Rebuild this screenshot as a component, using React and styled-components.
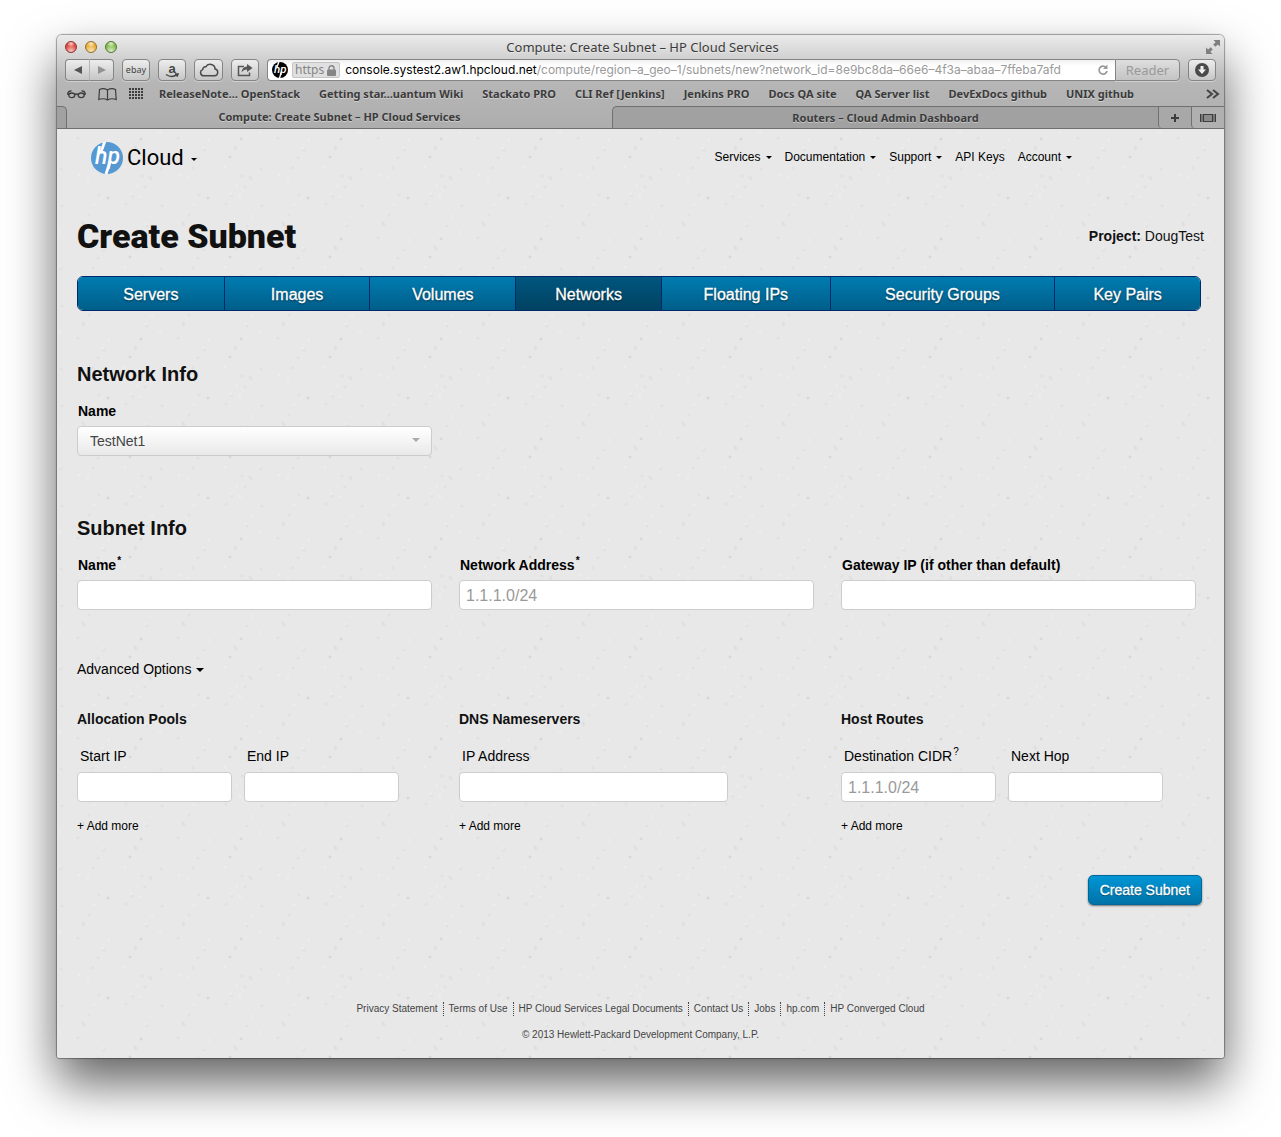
import React from "react";
import styled, { createGlobalStyle, css } from "styled-components";

const sans = '"Liberation Sans", Arial, Helvetica, sans-serif';
const system = '"Noto Sans", "Open Sans", sans-serif';

const GlobalStyle = createGlobalStyle`
  *, *::before, *::after { box-sizing: border-box; }
  body { margin: 0; background: #fff; font-family: ${sans}; font-size: 14px; color: #111; }
  a { color: inherit; text-decoration: none; }
  button, input, select { font: inherit; color: inherit; margin: 0; }
  h1, h2, h3, p, ul { margin: 0; padding: 0; }
`;

/* ---------- window ---------- */

const Desktop = styled.div`
  padding: 35px 57px 79px;
  overflow: hidden;
`;

const Window = styled.div`
  border-radius: 5px 5px 3px 3px;
  box-shadow: 0 0 1px 1px rgba(0, 0, 0, 0.35), 0 25px 50px rgba(0, 0, 0, 0.62);
`;

const Chrome = styled.header`
  border-radius: 5px 5px 0 0;
  background: linear-gradient(#ebebeb 0, #d0d0d0 24px, #b6b6b6 47px, #b2b2b2 71px, #adadad 100%);
  font-family: ${system};
  color: #3b3b3b;
  text-shadow: 0 1px 0 rgba(255, 255, 255, 0.4);
`;

const TitleBar = styled.div`
  display: grid;
  grid-template-columns: 60px 1fr 60px;
  align-items: center;
  height: 24px;
  padding: 0 4px 0 8px;
  font-size: 13px;
  line-height: 22px;
  text-align: center;
`;

const Lights = styled.div`
  display: flex;
  gap: 8px;
`;

const Light = styled.button`
  width: 12px;
  height: 12px;
  padding: 0;
  border: 1px solid ${(p) => p.$edge};
  border-radius: 50%;
  background: radial-gradient(circle at 50% 90%, rgba(255, 255, 255, 0.7), transparent 60%),
    radial-gradient(circle at 50% 15%, rgba(255, 255, 255, 0.75), transparent 40%), ${(p) => p.$fill};
`;

const FullScreen = styled.span`
  display: flex;
  justify-content: flex-end;
`;

const Toolbar = styled.div`
  display: flex;
  gap: 8px;
  height: 23px;
  padding: 0 8px;
`;

const ToolButton = styled.button`
  display: flex;
  align-items: center;
  justify-content: center;
  flex: none;
  width: ${(p) => p.$width || 28}px;
  height: 22px;
  padding: 0;
  border: 1px solid #858585;
  border-radius: 4px;
  background: linear-gradient(#ededed, #c6c6c6);
  box-shadow: 0 1px 0 rgba(255, 255, 255, 0.35);
  font-size: 9px;
  line-height: 16px;
  color: #444;
`;

const Pair = styled.div`
  display: flex;
  flex: none;
`;

const PairButton = styled(ToolButton)`
  width: 25px;
  ${(p) =>
    p.$side === "left"
      ? css`border-right-color: #b4b4b4; border-radius: 4px 0 0 4px;`
      : css`width: 24px; border-left: 0; border-radius: 0 4px 4px 0;`}
`;

const AddressGroup = styled.div`
  display: flex;
  flex: 1;
  min-width: 0;
`;

const Address = styled.div`
  display: flex;
  align-items: center;
  flex: 1;
  min-width: 0;
  height: 22px;
  padding: 0 6px 0 4px;
  border: 1px solid #858585;
  border-right: 0;
  border-radius: 4px 0 0 4px;
  background: linear-gradient(#f0f0f0, #fff 30%);
  font-size: 12px;
  line-height: 18px;
  color: #9a9a9a;
  text-shadow: none;
`;

const Secure = styled.span`
  display: flex;
  align-items: center;
  gap: 3px;
  height: 16px;
  margin: 0 5px 0 4px;
  padding: 0 3px 0 2px;
  border: 1px solid #c4c4c4;
  border-radius: 2px;
  background: #e0e0e0;
  color: #858585;
`;

const Url = styled.span`
  flex: 1;
  min-width: 0;
  overflow: hidden;
  white-space: nowrap;
  font-family: Inter, ${system};
  b { font-weight: 400; color: #000; }
`;

const Reload = styled.button`
  display: flex;
  padding: 0;
  margin-left: 8px;
  border: 0;
  background: none;
`;

const Reader = styled(ToolButton)`
  border-radius: 0 4px 4px 0;
  background: linear-gradient(#dedede, #c4c4c4);
  font-size: 13px;
  color: #999;
`;

const Bookmarks = styled.nav`
  display: flex;
  align-items: center;
  height: 24px;
  padding: 0 4px 0 10px;
  font-size: 11px;
  line-height: 16px;
  font-weight: 700;
  white-space: nowrap;
`;

const BookmarkIcons = styled.span`
  display: flex;
  align-items: center;
  gap: 12px;
  margin-right: 14px;
`;

const BookmarkLinks = styled.span`
  display: flex;
  gap: 19px;
`;

const More = styled.span`
  display: flex;
  margin-left: auto;
`;

const TabBar = styled.div`
  display: flex;
  height: 23px;
  border-bottom: 1px solid #6f6f6f;
`;

const Tab = styled.button`
  flex: 1;
  min-width: 0;
  padding: 0;
  border: 0;
  background: none;
  font-size: 11px;
  line-height: 20px;
  font-weight: 700;
  text-shadow: inherit;
  ${(p) =>
    !p.$active &&
    css`
      border: solid #707070;
      border-width: 1px 0 0 1px;
      border-radius: 5px 0 0 0;
      background: #a1a1a1;
    `}
`;

const TabStub = styled.span`
  width: 10px;
  border: solid #707070;
  border-width: 1px 1px 0 0;
  border-radius: 0 5px 0 0;
  background: #a1a1a1;
`;

const TabTools = styled.div`
  display: flex;
  border-top: 1px solid #707070;
  background: #a1a1a1;
`;

const TabTool = styled.button`
  display: flex;
  align-items: center;
  justify-content: center;
  width: 33px;
  padding: 0;
  border: 0;
  border-left: 1px solid #707070;
  border-radius: 0 0 0 4px;
  background: ${(p) => (p.$raised ? "#b0b0b0" : "#a8a8a8")};
`;

/* ---------- page ---------- */

/* Paper grain: faint specks scattered over a 100px tile. */
const specks = Array.from({ length: 34 }, (_, i) => {
  const x = 3 + ((i * 37 + (i % 5) * 11) % 95);
  const y = 3 + ((i * 61 + (i % 7) * 5) % 95);
  const tone = i % 3 === 0 ? "255, 255, 255, 0.3" : `80, 80, 80, ${i % 8 === 1 ? 0.16 : 0.07}`;
  return `radial-gradient(circle at ${x}px ${y}px, rgba(${tone}) 0, transparent 2px)`;
}).join(", ");

const Page = styled.div`
  border-radius: 0 0 3px 3px;
  background: ${specks};
  background-size: 100px 100px;
  background-color: #e8e8e8;
`;

const SiteHeader = styled.div`
  display: flex;
  align-items: flex-start;
  justify-content: space-between;
  padding: 13px 152px 0 34px;
`;

const Brand = styled.a`
  display: flex;
  align-items: center;
  gap: 4px;
  font-family: Roboto, sans-serif;
  font-size: 22px;
  line-height: 32px;
  color: #000;
`;

const SiteNav = styled.nav`
  display: flex;
  gap: 13px;
  font-size: 12px;
  line-height: 30px;
  color: #000;
`;

const Caret = styled.i`
  display: inline-block;
  margin-left: ${(p) => p.$gap || 5}px;
  vertical-align: middle;
  border: solid transparent;
  border-width: ${(p) => p.$size || 3}px ${(p) => p.$size || 3}px 0;
  border-top-color: currentColor;
`;

const Content = styled.main`
  padding: 42px 20px 0;
`;

const TitleRow = styled.div`
  display: flex;
  align-items: center;
  justify-content: space-between;
  margin-bottom: 20px;
`;

const Title = styled.h1`
  font-family: Roboto, sans-serif;
  font-weight: 900;
  font-size: 34px;
  line-height: 40px;
`;

const Project = styled.p`
  line-height: 20px;
`;

const Sections = styled.nav`
  display: grid;
  grid-template-columns: 146fr 146fr 146fr 146fr 169fr 225fr 146fr;
  height: 35px;
  margin-right: 3px;
  border: 1px solid #00296b;
  border-radius: 6px;
  overflow: hidden;
`;

const Section = styled.a`
  border-left: 1px solid #00296b;
  background: ${(p) => (p.$current ? "linear-gradient(#00567f, #00415f)" : "linear-gradient(#007cb0, #005c87)")};
  font-size: 16px;
  line-height: 35px;
  text-align: center;
  color: #fff;
  -webkit-text-stroke: 0.3px #fff;
  text-shadow: 0 1px 2px rgba(0, 0, 0, 0.6);
  &:first-child { border-left: 0; }
`;

const Group = styled.section`
  margin-top: ${(p) => p.$top}px;
  margin-right: 8px;
`;

const GroupTitle = styled.h2`
  margin-bottom: 15px;
  font-size: 20px;
  line-height: 24px;
`;

const Columns = styled.div`
  display: grid;
  grid-template-columns: repeat(3, 1fr);
  gap: 27px;
`;

const Field = styled.div`
  display: flex;
  flex-direction: column;
  flex: 0 1 ${(p) => p.$width || 355}px;
  min-width: 0;
  gap: ${(p) => (p.$light ? 6 : 5)}px;
`;

const Label = styled.label`
  padding-left: ${(p) => (p.$light ? 3 : 1)}px;
  font-weight: ${(p) => (p.$light ? 400 : 700)};
  line-height: 20px;
  color: #000;
  sup { margin-left: 1px; font-size: 10px; line-height: 0; }
`;

const boxed = css`
  width: 100%;
  height: 30px;
  border: 1px solid #ccc;
  border-radius: 4px;
`;

const Input = styled.input`
  ${boxed}
  padding: 2px 6px 0;
  background: #fff;
  font-size: 16px;
  &::placeholder { color: #999; opacity: 1; }
`;

const SelectBox = styled.div`
  position: relative;
  svg { position: absolute; right: 12px; top: 12px; pointer-events: none; }
`;

const Select = styled.select`
  ${boxed}
  appearance: none;
  padding: 0 30px 0 12px;
  background: linear-gradient(#fff, #e9e9e9);
  color: #444;
`;

const Toggle = styled.button`
  display: block;
  margin: 49px 0 30px;
  padding: 0;
  border: 0;
  background: none;
  line-height: 20px;
  color: #000;
`;

const PoolTitle = styled.h3`
  margin-bottom: 17px;
  font-size: 14px;
  line-height: 20px;
`;

const PoolFields = styled.div`
  display: flex;
  gap: 12px;
  margin-bottom: 14px;
`;

const AddMore = styled.button`
  display: block;
  padding: 0;
  border: 0;
  background: none;
  font-size: 12px;
  line-height: 20px;
  color: #000;
`;

const Actions = styled.div`
  display: flex;
  justify-content: flex-end;
  margin: 39px 2px 0 0;
`;

const Submit = styled.button`
  height: 30px;
  padding: 0 11px;
  border: 1px solid #00679a;
  border-radius: 5px;
  background: linear-gradient(#0096d6, #0073a8);
  box-shadow: 0 1px 2px rgba(0, 0, 0, 0.5);
  color: #fff;
  -webkit-text-stroke: 0.3px #fff;
  text-shadow: 0 1px 1px rgba(0, 0, 0, 0.5);
`;

const Footer = styled.footer`
  padding: 97px 0 16px;
  font-size: 10px;
  line-height: 14px;
  text-align: center;
  color: #444;
`;

const FooterLinks = styled.nav`
  display: flex;
  justify-content: center;
  margin-bottom: 12px;
  a { padding: 0 5px; }
  a + a { border-left: 1px dotted #444; }
`;

/* ---------- drawings ---------- */

const HpMark = ({ size, disc }) => (
  <svg width={size} height={size} viewBox="0 0 32 32" aria-hidden="true">
    <circle cx="16" cy="16" r="16" fill={disc} />
    <g stroke="#fff" strokeWidth="2.8">
      <line x1="14" y1="-1" x2="9.6" y2="11" />
      <line x1="19" y1="20" x2="15" y2="32" />
    </g>
    <text x="4" y="22" fill="#fff" fontFamily="Roboto" fontStyle="italic" fontWeight="500" fontSize="23">hp</text>
  </svg>
);

const Arrow = ({ flip }) => (
  <svg width="10" height="10" viewBox="0 0 10 10">
    <path d={flip ? "M1 1L9 5L1 9Z" : "M9 1L1 5L9 9Z"} fill={flip ? "#929292" : "#555"} />
  </svg>
);

const AmazonIcon = () => (
  <svg width="16" height="18" viewBox="0 0 16 18">
    <text x="8" y="12" textAnchor="middle" fill="#444" fontFamily="Liberation Sans" fontWeight="700" fontSize="13">a</text>
    <path d="M2 13.500q6 4 11 0M11 13.100h3l-1 2.600" fill="none" stroke="#444" strokeWidth="1.500" />
  </svg>
);

const CloudIcon = () => (
  <svg width="20" height="14" viewBox="0 0 20 14">
    <path d="M5 12.800h10.500a3.400 3.400 0 0 0 .6-6.700A5 5 0 0 0 6.800 3.800 2.700 2.700 0 0 0 3.700 6.600 3.200 3.200 0 0 0 5 12.800Z" fill="none" stroke="#4a4a4a" strokeWidth="1.500" />
  </svg>
);

const ShareIcon = () => (
  <svg width="18" height="14" viewBox="0 0 16 14">
    <path d="M7 3.500H1.500V12.500H12.500V9.500" fill="none" stroke="#555" strokeWidth="1.500" />
    <path d="M4.500 9.500Q5 4 10 3.500V1L15.500 5L10 9V6.500Q6.500 6.500 4.500 9.500Z" fill="#555" />
  </svg>
);

const LockIcon = () => (
  <svg width="9" height="11" viewBox="0 0 9 11">
    <rect x="0" y="4.500" width="9" height="6.500" rx="1" fill="#858585" />
    <path d="M2 5V3.300a2.500 2.500 0 0 1 5 0V5" fill="none" stroke="#858585" strokeWidth="1.400" />
  </svg>
);

const ReloadIcon = () => (
  <svg width="12" height="12" viewBox="0 0 12 12">
    <path d="M9 3.300A4 4 0 1 0 10 7" fill="none" stroke="#999" strokeWidth="1.700" />
    <path d="M10.500 0.500V5H6Z" fill="#999" />
  </svg>
);

const DownloadIcon = () => (
  <svg width="14" height="14" viewBox="0 0 14 14">
    <circle cx="7" cy="7" r="7" fill="#4a4a4a" />
    <path d="M5.500 3h3v3.500H11L7 11 3 6.500h2.500Z" fill="#f0f0f0" />
  </svg>
);

const FullScreenIcon = () => (
  <svg width="14" height="14" viewBox="0 0 14 14" fill="#7f7f7f">
    <path d="M7.500 0H14V6.500L11.800 4.400L9.400 6.800L7.200 4.600L9.600 2.200Z" />
    <path d="M6.500 14H0V7.500L2.200 9.600L4.600 7.200L6.800 9.400L4.400 11.800Z" />
  </svg>
);

const GlassesIcon = () => (
  <svg width="19" height="10" viewBox="0 0 19 10" fill="none" stroke="#3d3d3d" strokeWidth="1.300">
    <ellipse cx="4.800" cy="6.300" rx="3" ry="2.300" />
    <ellipse cx="14.200" cy="6.300" rx="3" ry="2.300" />
    <path d="M7.600 5.600q1.900-1.200 3.800 0M2 5.600L.6 5Q1.500 1.600 4.500 2M17 5.600L18.400 5Q17.500 1.600 14.500 2" />
  </svg>
);

const BookIcon = () => (
  <svg width="19" height="13" viewBox="0 0 19 13" fill="none" stroke="#3d3d3d" strokeWidth="1.200">
    <path d="M9.500 2Q5.500-.5 1.500 1.500L.8 11.500Q5.500 9.800 9.500 12Q13.500 9.800 18.200 11.500L17.500 1.500Q13.500-.5 9.500 2V12" />
  </svg>
);

const GridIcon = () => (
  <svg width="16" height="12" viewBox="0 0 16 12" fill="#3d3d3d">
    {[0, 3, 6, 9].map((y) =>
      [0, 3, 6, 9, 12].map((x) => <rect key={`${x}-${y}`} x={x} y={y} width="2" height="2" />)
    )}
  </svg>
);

const MoreIcon = () => (
  <svg width="14" height="10" viewBox="0 0 14 10" fill="none" stroke="#444" strokeWidth="2">
    <path d="M1 1L6 5L1 9M7 1L12 5L7 9" />
  </svg>
);

const PlusIcon = () => (
  <svg width="8" height="8" viewBox="0 0 8 8" stroke="#3d3d3d" strokeWidth="2">
    <path d="M4 0V8M0 4H8" />
  </svg>
);

const AllTabsIcon = () => (
  <svg width="16" height="8" viewBox="0 0 16 8" fill="none" stroke="#3d3d3d">
    <rect x="3.500" y=".5" width="9" height="7" fill="#8a8a8a" />
    <path d="M.5 0V8M2 0V8M14 0V8M15.500 0V8" />
  </svg>
);

/* ---------- content ---------- */

const bookmarks = [
  "ReleaseNote… OpenStack", "Getting star…uantum Wiki", "Stackato PRO", "CLI Ref [Jenkins]", "Jenkins PRO",
  "Docs QA site", "QA Server list", "DevExDocs github", "UNIX github",
];

const siteLinks = [
  ["Services", true], ["Documentation", true], ["Support", true], ["API Keys", false], ["Account", true],
];

const sections = ["Servers", "Images", "Volumes", "Networks", "Floating IPs", "Security Groups", "Key Pairs"];

const subnetFields = [
  { id: "subnet-name", label: "Name", mark: "*" },
  { id: "network-address", label: "Network Address", mark: "*", placeholder: "1.1.1.0/24" },
  { id: "gateway-ip", label: "Gateway IP (if other than default)" },
];

const pools = [
  { title: "Allocation Pools", fields: [
    { id: "start-ip", label: "Start IP", width: 155 },
    { id: "end-ip", label: "End IP", width: 155 },
  ] },
  { title: "DNS Nameservers", fields: [{ id: "dns-ip", label: "IP Address", width: 269 }] },
  { title: "Host Routes", fields: [
    { id: "cidr", label: "Destination CIDR", mark: "?", placeholder: "1.1.1.0/24", width: 155 },
    { id: "next-hop", label: "Next Hop", width: 155 },
  ] },
];

const footerLinks = [
  "Privacy Statement", "Terms of Use", "HP Cloud Services Legal Documents", "Contact Us", "Jobs", "hp.com",
  "HP Converged Cloud",
];

const TextField = ({ id, label, mark, placeholder, width, light }) => (
  <Field $width={width} $light={light}>
    <Label htmlFor={id} $light={light}>
      {label}
      {mark && <sup>{mark}</sup>}
    </Label>
    <Input id={id} type="text" placeholder={placeholder} />
  </Field>
);

const BrowserChrome = () => (
  <Chrome>
    <TitleBar>
      <Lights>
        <Light $fill="#e0483e" $edge="#8d3a34" aria-label="Close" />
        <Light $fill="#e8ad35" $edge="#93702a" aria-label="Minimize" />
        <Light $fill="#85bd4b" $edge="#56783a" aria-label="Zoom" />
      </Lights>
      <span>Compute: Create Subnet – HP Cloud Services</span>
      <FullScreen><FullScreenIcon /></FullScreen>
    </TitleBar>
    <Toolbar>
      <Pair>
        <PairButton $side="left" aria-label="Back"><Arrow /></PairButton>
        <PairButton $side="right" aria-label="Forward"><Arrow flip /></PairButton>
      </Pair>
      <ToolButton>ebay</ToolButton>
      <ToolButton aria-label="Amazon"><AmazonIcon /></ToolButton>
      <ToolButton $width={29} aria-label="iCloud tabs"><CloudIcon /></ToolButton>
      <ToolButton aria-label="Share"><ShareIcon /></ToolButton>
      <AddressGroup>
        <Address>
          <HpMark size={16} disc="#000" />
          <Secure>https<LockIcon /></Secure>
          <Url>
            <b>console.systest2.aw1.hpcloud.net</b>
            /compute/region–a_geo–1/subnets/new?network_id=8e9bc8da–66e6–4f3a–abaa–7ffeba7afd
          </Url>
          <Reload aria-label="Reload"><ReloadIcon /></Reload>
        </Address>
        <Reader $width={65}>Reader</Reader>
      </AddressGroup>
      <ToolButton aria-label="Downloads"><DownloadIcon /></ToolButton>
    </Toolbar>
    <Bookmarks>
      <BookmarkIcons><GlassesIcon /><BookIcon /><GridIcon /></BookmarkIcons>
      <BookmarkLinks>
        {bookmarks.map((b) => <a key={b} href="#">{b}</a>)}
      </BookmarkLinks>
      <More><MoreIcon /></More>
    </Bookmarks>
    <TabBar>
      <TabStub />
      <Tab $active>Compute: Create Subnet – HP Cloud Services</Tab>
      <Tab>Routers – Cloud Admin Dashboard</Tab>
      <TabTools>
        <TabTool aria-label="New tab"><PlusIcon /></TabTool>
        <TabTool $raised aria-label="Show all tabs"><AllTabsIcon /></TabTool>
      </TabTools>
    </TabBar>
  </Chrome>
);

export default function App() {
  return (
    <>
      <GlobalStyle />
      <Desktop>
        <Window>
          <BrowserChrome />
          <Page>
            <SiteHeader>
              <Brand href="#">
                <HpMark size={32} disc="#5699d2" />
                <span>Cloud<Caret $gap={7} /></span>
              </Brand>
              <SiteNav>
                {siteLinks.map(([name, menu]) => (
                  <a key={name} href="#">{name}{menu && <Caret />}</a>
                ))}
              </SiteNav>
            </SiteHeader>
            <Content>
              <TitleRow>
                <Title>Create Subnet</Title>
                <Project><strong>Project:</strong> DougTest</Project>
              </TitleRow>
              <Sections>
                {sections.map((s) => (
                  <Section key={s} href="#" $current={s === "Networks"}>{s}</Section>
                ))}
              </Sections>
              <form onSubmit={(e) => e.preventDefault()}>
                <Group $top={51}>
                  <GroupTitle>Network Info</GroupTitle>
                  <Columns>
                    <Field>
                      <Label htmlFor="network">Name</Label>
                      <SelectBox>
                        <Select id="network"><option>TestNet1</option></Select>
                        <svg width="8" height="4" viewBox="0 0 8 4"><path d="M0 0H8L4 4Z" fill="#aaa" /></svg>
                      </SelectBox>
                    </Field>
                  </Columns>
                </Group>
                <Group $top={60}>
                  <GroupTitle>Subnet Info</GroupTitle>
                  <Columns>
                    {subnetFields.map((f) => <TextField key={f.id} {...f} />)}
                  </Columns>
                  <Toggle type="button">Advanced Options<Caret $size={4} /></Toggle>
                  <Columns>
                    {pools.map((pool) => (
                      <div key={pool.title}>
                        <PoolTitle>{pool.title}</PoolTitle>
                        <PoolFields>
                          {pool.fields.map((f) => <TextField key={f.id} {...f} light />)}
                        </PoolFields>
                        <AddMore type="button">+ Add more</AddMore>
                      </div>
                    ))}
                  </Columns>
                </Group>
                <Actions><Submit type="submit">Create Subnet</Submit></Actions>
              </form>
            </Content>
            <Footer>
              <FooterLinks>
                {footerLinks.map((l) => <a key={l} href="#">{l}</a>)}
              </FooterLinks>
              <p>© 2013 Hewlett-Packard Development Company, L.P.</p>
            </Footer>
          </Page>
        </Window>
      </Desktop>
    </>
  );
}
